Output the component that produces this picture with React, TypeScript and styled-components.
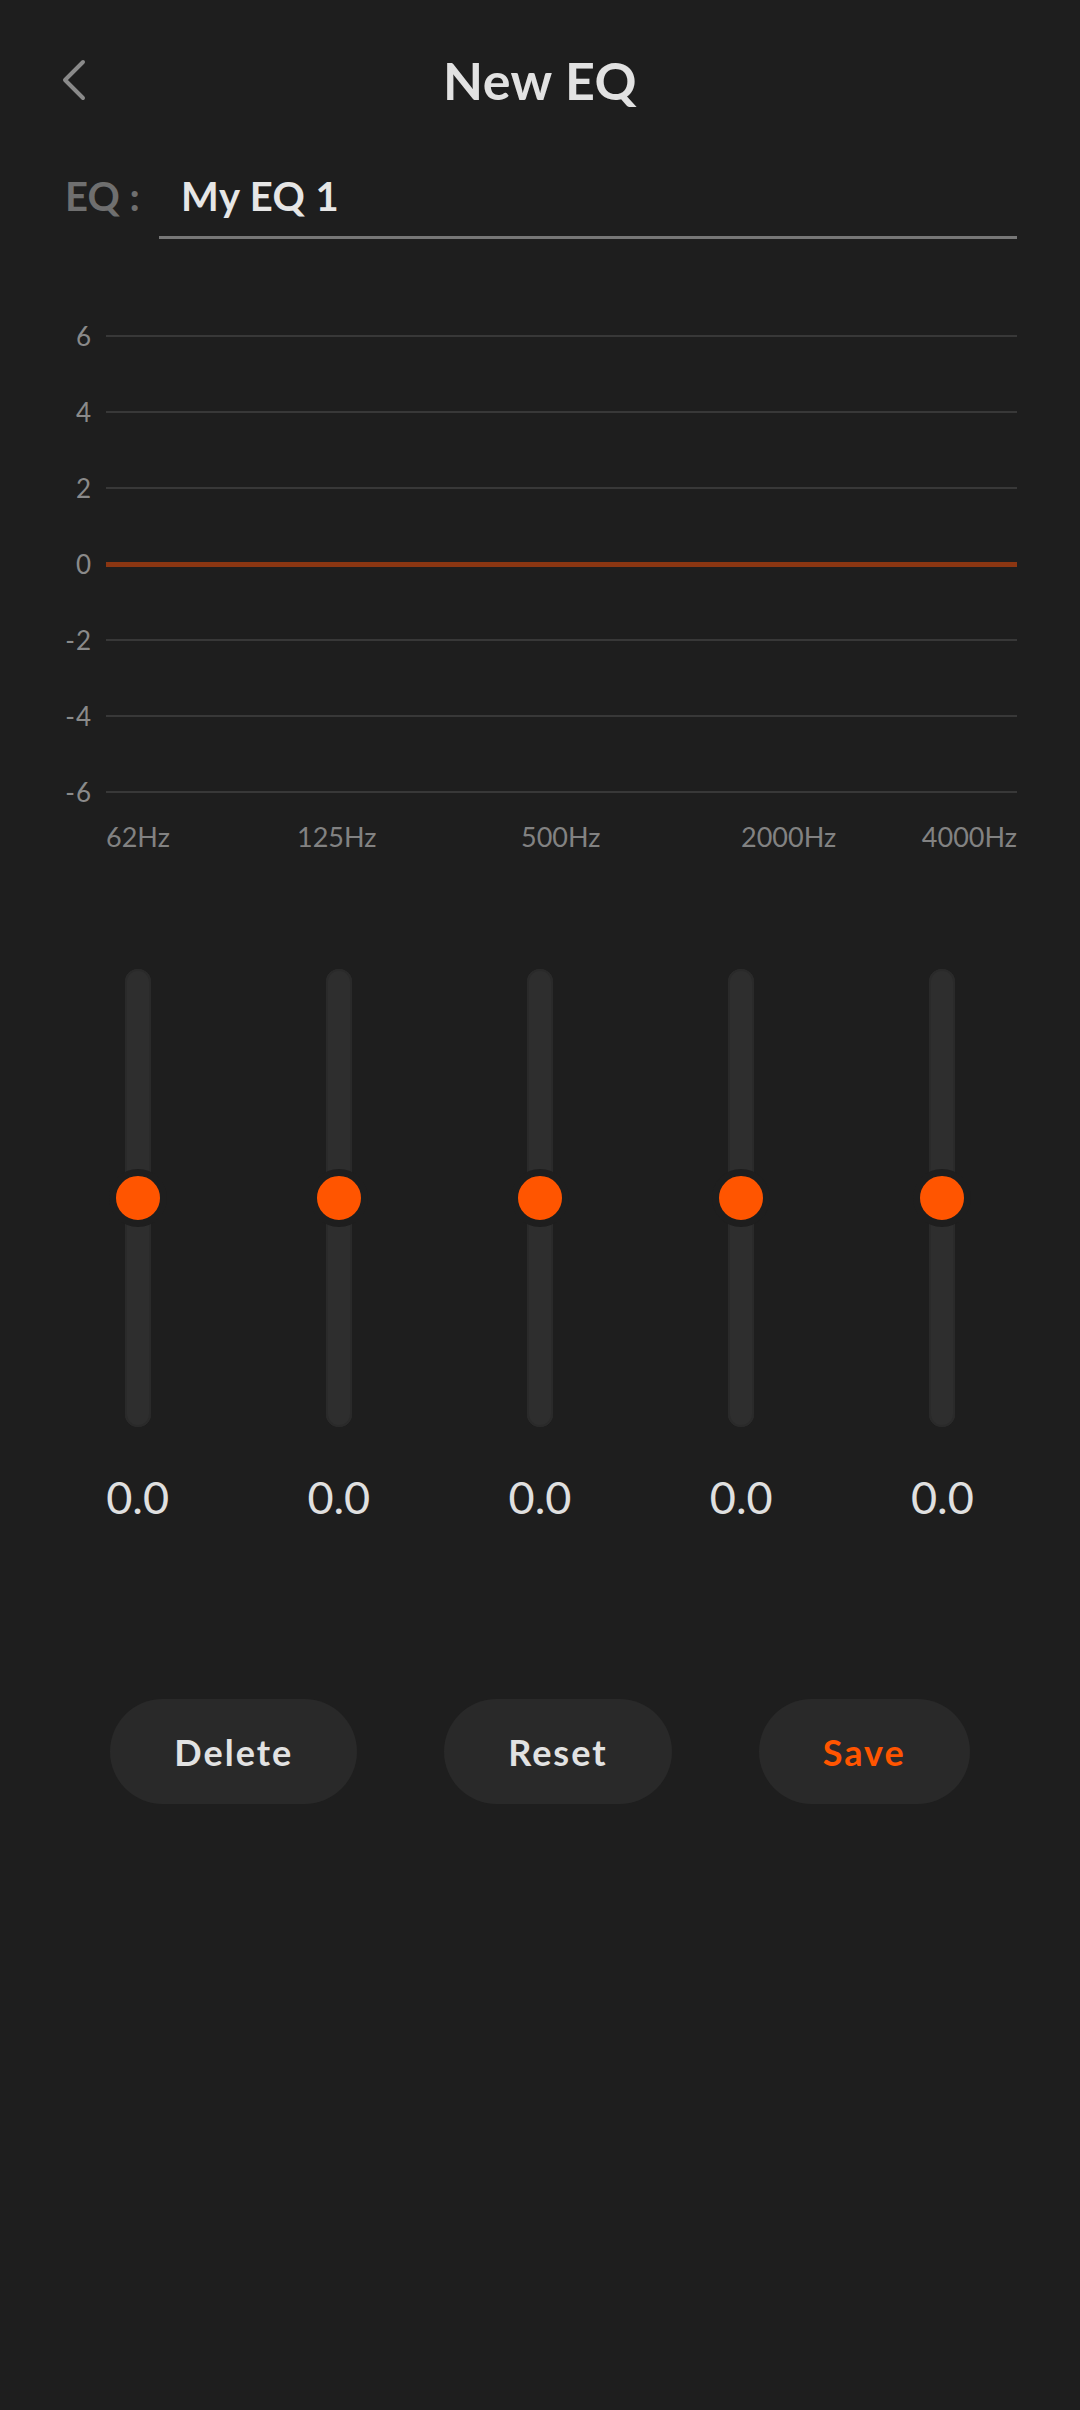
import React from "react";
import styled, { createGlobalStyle } from "styled-components";

const GlobalStyle = createGlobalStyle`
  html, body { margin: 0; padding: 0; background: #1e1e1e; }
  body { font-family: Lato, "Open Sans", sans-serif; }
  * { box-sizing: border-box; }
`;

const Page = styled.div`
  width: 1080px;
  min-height: 2410px;
  background: #1e1e1e;
  display: flex;
  flex-direction: column;
`;

const Header = styled.header`
  height: 160px;
  display: grid;
  grid-template-columns: 1fr auto 1fr;
  align-items: center;
`;

const BackButton = styled.button`
  justify-self: start;
  margin-left: 56px;
  width: 36px;
  height: 48px;
  padding: 0;
  border: none;
  background: transparent;
  display: flex;
  align-items: center;
  justify-content: center;
`;

const Title = styled.h1`
  margin: 0;
  font-size: 52px;
  line-height: 1;
  font-weight: 700;
  color: #e2e2e2;
  letter-spacing: 0.5px;
`;

const NameRow = styled.div`
  margin: 12px 63px 0 65px;
  display: flex;
  align-items: flex-end;
`;

const NameLabel = styled.span`
  width: 94px;
  font-size: 40px;
  line-height: 48px;
  padding-bottom: 19px;
  font-weight: 700;
  color: #6f6f6f;
`;

const NameField = styled.div`
  flex: 1;
  padding: 0 0 16px 22px;
  border-bottom: 3px solid #777777;
  font-size: 40px;
  line-height: 48px;
  font-weight: 700;
  color: #e6e6e6;
  letter-spacing: 0.5px;
`;

const Chart = styled.div`
  margin-top: 82px;
  display: flex;
  flex-direction: column;
  gap: 46px;
  padding-right: 63px;
`;

const GridRow = styled.div`
  height: 30px;
  display: flex;
  align-items: center;
`;

const AxisLabel = styled.span`
  width: 92px;
  text-align: right;
  font-size: 26px;
  line-height: 30px;
  letter-spacing: 1px;
  color: #8a8a8a;
`;

const GridLine = styled.div<{ $zero?: boolean }>`
  flex: 1;
  margin-left: 14px;
  height: ${(p) => (p.$zero ? "5px" : "2px")};
  background: ${(p) => (p.$zero ? "#8b3612" : "#383838")};
`;

const FreqRow = styled.div`
  margin: 15px 63px 0 106px;
  display: grid;
  grid-template-columns: 191px 224px 220px 177px 1fr;
`;

const FreqLabel = styled.span<{ $end?: boolean }>`
  font-size: 27px;
  line-height: 30px;
  color: #828282;
  text-align: ${(p) => (p.$end ? "right" : "left")};
`;

const Sliders = styled.div`
  margin-top: 117px;
  padding: 0 37px;
  display: grid;
  grid-template-columns: repeat(5, 1fr);
`;

const Band = styled.div`
  display: flex;
  flex-direction: column;
  align-items: center;
`;

const Track = styled.div`
  width: 26px;
  height: 458px;
  border-radius: 13px;
  background: #2e2e2e;
  box-shadow: inset 0 0 0 2px #2a2a2a;
  display: flex;
  flex-direction: column;
  align-items: center;
  justify-content: center;
`;

const Thumb = styled.div`
  flex-shrink: 0;
  width: 58px;
  height: 58px;
  border-radius: 50%;
  background: #ff5500;
  border: 7px solid #1e1e1e;
`;

const Value = styled.span`
  margin-top: 42px;
  font-size: 45px;
  line-height: 56px;
  font-weight: 400;
  color: #e0e0e0;
`;

const Actions = styled.div`
  margin-top: 174px;
  display: flex;
  justify-content: center;
  gap: 87px;
`;

const ActionButton = styled.button<{ $accent?: boolean }>`
  height: 105px;
  padding: 0 64px;
  border: none;
  border-radius: 53px;
  background: #292929;
  font-family: Lato, "Open Sans", sans-serif;
  font-size: 36px;
  font-weight: 700;
  letter-spacing: 2px;
  color: ${(p) => (p.$accent ? "#ff5500" : "#e2e2e2")};
`;

const levels = [6, 4, 2, 0, -2, -4, -6];
const freqs = ["62Hz", "125Hz", "500Hz", "2000Hz", "4000Hz"];

export default function App() {
  return (
    <Page>
      <GlobalStyle />
      <Header>
        <BackButton aria-label="Back">
          <svg width="30" height="44" viewBox="0 0 30 44" fill="none">
            <path
              d="M24 4 L6 22 L24 40"
              stroke="#8a8a8a"
              strokeWidth="4"
              strokeLinecap="round"
              strokeLinejoin="round"
            />
          </svg>
        </BackButton>
        <Title>New EQ</Title>
        <span />
      </Header>

      <NameRow>
        <NameLabel>EQ :</NameLabel>
        <NameField>My EQ 1</NameField>
      </NameRow>

      <Chart>
        {levels.map((l) => (
          <GridRow key={l}>
            <AxisLabel>{l}</AxisLabel>
            <GridLine $zero={l === 0} />
          </GridRow>
        ))}
      </Chart>

      <FreqRow>
        {freqs.map((f, i) => (
          <FreqLabel key={f} $end={i === freqs.length - 1}>
            {f}
          </FreqLabel>
        ))}
      </FreqRow>

      <Sliders>
        {freqs.map((f) => (
          <Band key={f}>
            <Track>
              <Thumb />
            </Track>
            <Value>0.0</Value>
          </Band>
        ))}
      </Sliders>

      <Actions>
        <ActionButton>Delete</ActionButton>
        <ActionButton>Reset</ActionButton>
        <ActionButton $accent>Save</ActionButton>
      </Actions>
    </Page>
  );
}
